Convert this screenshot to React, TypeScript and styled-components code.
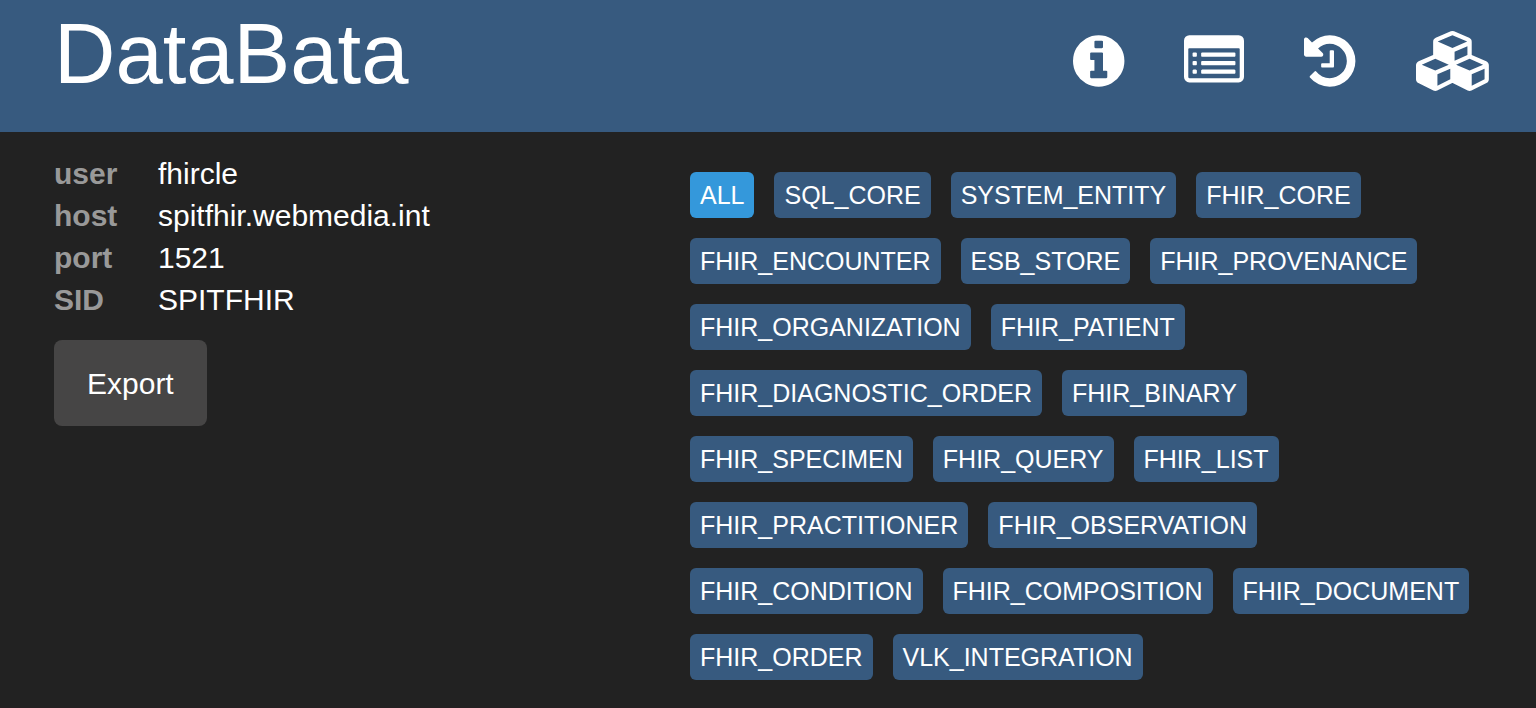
import React, { useState } from "react";
import styled, { createGlobalStyle } from "styled-components";

const GlobalStyle = createGlobalStyle`
  *, *::before, *::after {
    box-sizing: border-box;
  }

  body {
    margin: 0;
    background: #222222;
    color: #ffffff;
    font-family: "Liberation Sans", Arial, sans-serif;
    font-size: 30px;
    line-height: 42px;
  }
`;

const Page = styled.div`
  min-height: 100vh;
  border-bottom: 1px solid #252022;
`;

const Header = styled.header`
  display: flex;
  justify-content: space-between;
  align-items: flex-start;
  min-height: 132px;
  padding: 0 43px 0 54px;
  background: #375a7f;
`;

const Title = styled.h1`
  margin: 0;
  font-size: 85px;
  font-weight: 400;
  line-height: 108px;
`;

const Toolbar = styled.nav`
  display: flex;
  gap: 60px;
  padding-top: 31px;
`;

const IconLink = styled.a`
  display: block;
  color: #ffffff;
`;

const Glyph = styled.svg`
  display: block;
  height: 60px;
  fill: currentColor;
  overflow: visible;
`;

const Main = styled.main`
  display: grid;
  grid-template-columns: minmax(0, 4fr) minmax(0, 5fr);
  padding: 21px 51px 26px 54px;
`;

const Details = styled.dl`
  display: grid;
  grid-template-columns: 104px minmax(0, 1fr);
  margin: 0 0 19px;
`;

const Term = styled.dt`
  color: #999999;
  font-weight: 700;
`;

const Value = styled.dd`
  margin: 0;
`;

const ExportButton = styled.button`
  padding: 23px 33px 21px;
  border: 0;
  border-radius: 8px;
  background: #464545;
  color: #ffffff;
  font: inherit;
  cursor: pointer;
`;

const TagList = styled.div`
  display: flex;
  flex-wrap: wrap;
  align-content: flex-start;
  gap: 20px;
  padding-top: 19px;
`;

const Tag = styled.button<{ $active: boolean }>`
  padding: 0 10px;
  border: 0;
  border-radius: 6px;
  background: ${({ $active }) => ($active ? "#3498db" : "#375a7f")};
  color: #ffffff;
  font-family: inherit;
  font-size: 25px;
  line-height: 46px;
  cursor: pointer;
`;

const icons = [
  {
    label: "Info",
    width: 1536,
    path: "M1024 1376v-160q0-14-9-23t-23-9h-96v-512q0-14-9-23t-23-9h-320q-14 0-23 9t-9 23v160q0 14 9 23t23 9h96v320h-96q-14 0-23 9t-9 23v160q0 14 9 23t23 9h448q14 0 23-9t9-23zm-128-896v-160q0-14-9-23t-23-9h-192q-14 0-23 9t-9 23v160q0 14 9 23t23 9h192q14 0 23-9t9-23zm640 416q0 209-103 385.500t-279.500 279.500-385.500 103-385.500-103-279.500-279.500-103-385.500 103-385.500 279.500-279.500 385.500-103 385.500 103 279.500 279.500 103 385.500z",
  },
  {
    label: "List",
    width: 1792,
    path: "M384 1184v64q0 13-9.500 22.500t-22.500 9.500h-64q-13 0-22.500-9.500t-9.500-22.500v-64q0-13 9.500-22.500t22.500-9.500h64q13 0 22.500 9.500t9.500 22.500zm0-256v64q0 13-9.500 22.500t-22.500 9.500h-64q-13 0-22.500-9.500t-9.500-22.500v-64q0-13 9.500-22.500t22.500-9.500h64q13 0 22.500 9.500t9.500 22.500zm0-256v64q0 13-9.500 22.500t-22.500 9.500h-64q-13 0-22.500-9.500t-9.500-22.500v-64q0-13 9.500-22.500t22.500-9.500h64q13 0 22.500 9.500t9.500 22.500zm1152 512v64q0 13-9.500 22.500t-22.500 9.500h-960q-13 0-22.500-9.500t-9.500-22.500v-64q0-13 9.500-22.500t22.500-9.500h960q13 0 22.500 9.500t9.500 22.500zm0-256v64q0 13-9.500 22.500t-22.500 9.500h-960q-13 0-22.500-9.500t-9.500-22.500v-64q0-13 9.500-22.500t22.500-9.500h960q13 0 22.500 9.500t9.500 22.500zm0-256v64q0 13-9.500 22.500t-22.500 9.500h-960q-13 0-22.500-9.500t-9.500-22.500v-64q0-13 9.500-22.500t22.500-9.500h960q13 0 22.500 9.500t9.500 22.500zm128 704v-832q0-13-9.500-22.500t-22.500-9.500h-1472q-13 0-22.500 9.500t-9.500 22.500v832q0 13 9.500 22.500t22.500 9.500h1472q13 0 22.500-9.500t9.500-22.500zm128-1088v1088q0 66-47 113t-113 47h-1472q-66 0-113-47t-47-113v-1088q0-66 47-113t113-47h1472q66 0 113 47t47 113z",
  },
  {
    label: "History",
    width: 1536,
    path: "M1536 896q0 156-61 298t-164 245-245 164-298 61q-172 0-327-72.500t-264-204.500q-7-10-6.500-22.500t8.500-20.500l137-138q10-9 25-9 16 2 23 12 73 95 179 147t225 52q104 0 198.500-40.500t163.500-109.500 109.500-163.500 40.500-198.500-40.500-198.500-109.500-163.500-163.500-109.500-198.500-40.500q-98 0-188 35.500t-160 101.500l137 138q31 30 14 69-17 40-59 40h-448q-26 0-45-19t-19-45v-448q0-42 40-59 39-17 69 14l130 129q107-101 244.500-156.500t284.500-55.500q156 0 298 61t245 164 164 245 61 298zm-640-288v448q0 14-9 23t-23 9h-320q-14 0-23-9t-9-23v-64q0-14 9-23t23-9h224v-352q0-14 9-23t23-9h64q14 0 23 9t9 23z",
  },
  {
    label: "Modules",
    width: 2304,
    path: "M640 1632l384-192v-314l-384 164v342zm-64-454l404-173-404-173-404 173zm1088 454l384-192v-314l-384 164v342zm-64-454l404-173-404-173-404 173zm-448-293l384-165v-266l-384 164v267zm-64-379l441-189-441-189-441 189zm1088 518v416q0 36-19 67t-52 47l-448 224q-25 14-57 14t-57-14l-448-224q-4-2-7-4-2 2-7 4l-448 224q-25 14-57 14t-57-14l-448-224q-33-16-52-47t-19-67v-416q0-38 21.500-70t56.500-48l434-186v-400q0-38 21.500-70t56.500-48l448-192q23-10 50-10t50 10l448 192q35 16 56.500 48t21.500 70v400l434 186q36 16 57 48t21 70z",
  },
];

const connection = [
  ["user", "fhircle"],
  ["host", "spitfhir.webmedia.int"],
  ["port", "1521"],
  ["SID", "SPITFHIR"],
];

const tags = [
  "ALL",
  "SQL_CORE",
  "SYSTEM_ENTITY",
  "FHIR_CORE",
  "FHIR_ENCOUNTER",
  "ESB_STORE",
  "FHIR_PROVENANCE",
  "FHIR_ORGANIZATION",
  "FHIR_PATIENT",
  "FHIR_DIAGNOSTIC_ORDER",
  "FHIR_BINARY",
  "FHIR_SPECIMEN",
  "FHIR_QUERY",
  "FHIR_LIST",
  "FHIR_PRACTITIONER",
  "FHIR_OBSERVATION",
  "FHIR_CONDITION",
  "FHIR_COMPOSITION",
  "FHIR_DOCUMENT",
  "FHIR_ORDER",
  "VLK_INTEGRATION",
];

export default function App() {
  const [active, setActive] = useState("ALL");

  return (
    <Page>
      <GlobalStyle />
      <Header>
        <Title>DataBata</Title>
        <Toolbar aria-label="Views">
          {icons.map(({ label, width, path }) => (
            <IconLink key={label} href={`#${label.toLowerCase()}`} aria-label={label}>
              <Glyph viewBox={`0 0 ${width} 1792`} aria-hidden="true">
                <path d={path} />
              </Glyph>
            </IconLink>
          ))}
        </Toolbar>
      </Header>
      <Main>
        <section>
          <Details>
            {connection.map(([term, value]) => (
              <React.Fragment key={term}>
                <Term>{term}</Term>
                <Value>{value}</Value>
              </React.Fragment>
            ))}
          </Details>
          <ExportButton type="button">Export</ExportButton>
        </section>
        <TagList>
          {tags.map((tag) => (
            <Tag
              key={tag}
              type="button"
              $active={tag === active}
              aria-pressed={tag === active}
              onClick={() => setActive(tag)}
            >
              {tag}
            </Tag>
          ))}
        </TagList>
      </Main>
    </Page>
  );
}
